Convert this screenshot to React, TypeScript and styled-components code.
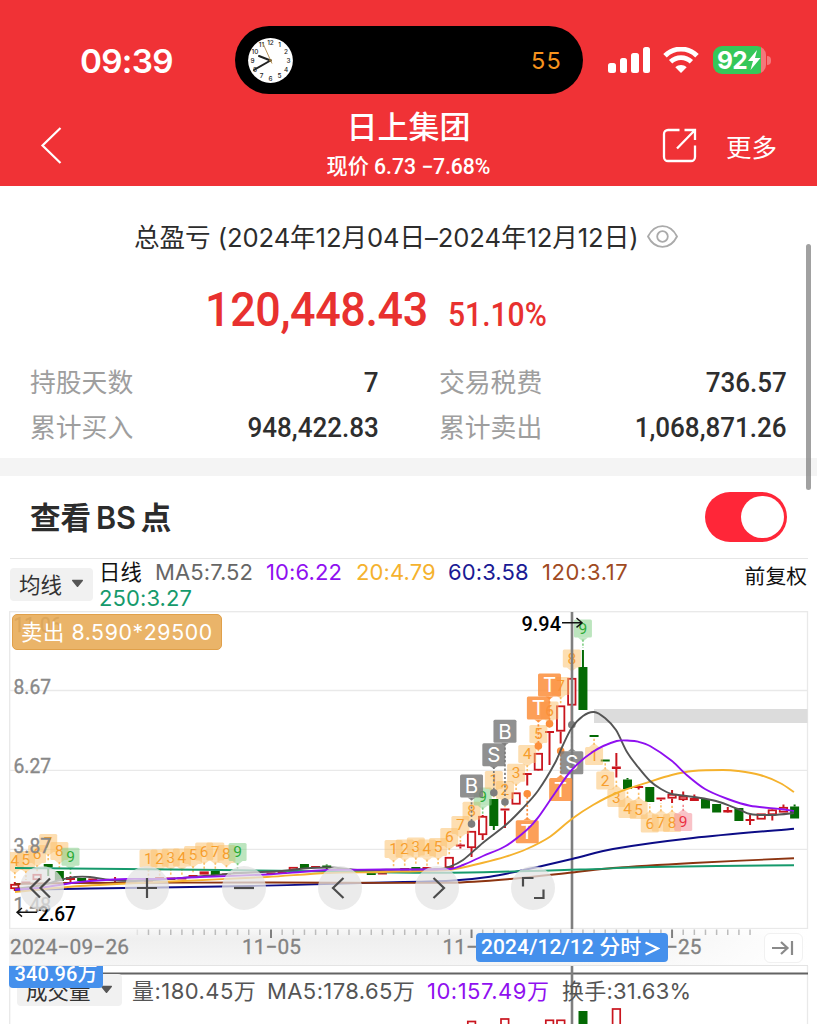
import React from "react";
import styled, { createGlobalStyle } from "styled-components";

const SANS = `Inter, "Noto Sans CJK SC", sans-serif`;
const DIN = `Roboto, "Noto Sans CJK SC", sans-serif`;

const Global = createGlobalStyle`
  * { box-sizing: border-box; }
  body { margin: 0; background: #fff; font-family: ${SANS}; color: #2c2c2c; overflow: hidden; }
  svg { display: block; }
`;

const Screen = styled.main`
  position: relative;
  width: 818px;
  height: 1024px;
  overflow: hidden;
  background: #fff;
  white-space: nowrap;
`;

/* ---------- header ---------- */

const Header = styled.header`
  width: 817px;
  height: 186px;
  background: #f03236;
  color: #fff;
`;

const StatusBar = styled.div`
  height: 102px;
  padding: 18px 46px 0 80px;
  display: flex;
  align-items: center;
`;

const Time = styled.span`
  width: 155px;
  padding-top: 1px;
  font-size: 33.3px;
  font-weight: 600;
  letter-spacing: -0.7px;
`;

const Island = styled.div`
  width: 348px;
  height: 68px;
  border-radius: 34px;
  background: #000;
  padding: 0 21px 0 13px;
  display: flex;
  align-items: center;
  justify-content: space-between;
`;

const Timer = styled.span`
  font-size: 23.5px;
  letter-spacing: 1.2px;
  color: #f7931d;
`;

const Indicators = styled.div`
  margin-left: 25px;
  display: flex;
  align-items: center;
`;

const Signal = styled.div`
  width: 42px;
  height: 26px;
  display: flex;
  align-items: flex-end;
  justify-content: space-between;
`;

const SignalBar = styled.i<{ $h: number }>`
  width: 7.5px;
  height: ${(p) => p.$h}px;
  border-radius: 2.5px;
  background: #fff;
`;

const WifiIcon = styled.svg`
  margin-left: 13px;
`;

const Battery = styled.div`
  margin-left: 14px;
  width: 53px;
  height: 28px;
  border-radius: 9px;
  padding-left: 4px;
  background: linear-gradient(90deg, #35c759 48px, #f4777a 48px);
  display: flex;
  align-items: center;
  font-size: 24.5px;
  font-weight: 700;
  letter-spacing: -0.7px;
`;

const BatteryNub = styled.i`
  margin-left: 1px;
  width: 4px;
  height: 9px;
  border-radius: 0 4px 4px 0;
  background: #f4777a;
`;

const NavBar = styled.div`
  height: 84px;
  display: grid;
  grid-template-columns: 240px 337px 240px;
`;

const NavLeft = styled.div`
  padding: 25px 0 0 40px;
`;

const NavTitle = styled.div`
  display: flex;
  flex-direction: column;
  align-items: center;
`;

const StockName = styled.h1`
  margin: 8px 0 0;
  height: 35px;
  line-height: 34px;
  font-size: 31px;
  font-weight: 500;
`;

const StockQuote = styled.div`
  height: 40px;
  line-height: 43px;
  font-family: ${DIN};
  font-size: 21.2px;
  font-weight: 500;
  letter-spacing: -0.05px;
`;

const NavRight = styled.div`
  padding: 3px 40px 0 0;
  display: flex;
  align-items: center;
  justify-content: flex-end;
  gap: 29px;
  font-size: 25.5px;
`;

/* ---------- summary ---------- */

const Summary = styled.section`
  height: 272px;
`;

const PeriodRow = styled.div`
  height: 98px;
  padding-left: 134px;
  display: flex;
  align-items: center;
`;

const Period = styled.span`
  font-size: 25.6px;
  letter-spacing: -0.08px;
  margin-right: 9px;
`;

const EyeIcon = styled.svg`
  margin-top: 3px;
`;

const ProfitRow = styled.div`
  height: 60px;
  padding: 4px 0 0 205px;
  display: flex;
  align-items: baseline;
  font-family: ${DIN};
  font-weight: 500;
  color: #e8312f;
  line-height: 44px;
`;

const Profit = styled.span`
  font-size: 48px;
  width: 243px;
  letter-spacing: -0.4px;
  transform: scaleX(0.935);
  transform-origin: 0 50%;
`;

const ProfitRate = styled.span`
  font-size: 32.5px;
  transform: scaleX(0.925);
  transform-origin: 0 50%;
`;

const Stats = styled.dl`
  margin: 15px 0 0;
  padding: 0 30px;
  display: grid;
  grid-template-columns: 349px 348px;
  column-gap: 60px;
  grid-auto-rows: 45px;
`;

const Stat = styled.div`
  display: flex;
  align-items: center;
  justify-content: space-between;
`;

const StatName = styled.dt`
  margin-top: -3px;
  font-size: 25.8px;
  font-weight: 400;
  color: #9e9e9e;
`;

const StatValue = styled.dd`
  margin: 2px 0 0;
  font-family: ${DIN};
  font-size: 27.5px;
  font-weight: 500;
  color: #2e2e2e;
  transform: scaleX(0.946);
  transform-origin: 100% 50%;
`;

const Band = styled.div`
  width: 817px;
  height: 18px;
  background: #f4f4f4;
`;

const ToggleRow = styled.section`
  height: 82px;
  padding: 0 31px 0 30px;
  display: flex;
  align-items: center;
  justify-content: space-between;
`;

const ToggleLabel = styled.h2`
  margin: -3px 0 0;
  font-size: 30.6px;
  font-weight: 600;
  word-spacing: -3px;
`;

const Toggle = styled.button`
  width: 82px;
  height: 50px;
  padding: 4px 4px 4px 36px;
  border: 0;
  border-radius: 25px;
  background: #ff2638;
`;

const Knob = styled.i`
  display: block;
  width: 43px;
  height: 42px;
  border-radius: 21px;
  background: #fff;
`;

const ScrollThumb = styled.i`
  position: absolute;
  left: 806px;
  top: 244px;
  width: 5px;
  height: 246px;
  border-radius: 3px;
  background: rgba(130, 130, 130, 0.75);
`;

/* ---------- indicator legend ---------- */

const Legend = styled.div`
  margin: 0 10px 0 10px;
  width: 798px;
  height: 53px;
  border-top: 1px solid #e6e6e6;
  display: flex;
`;

const Picker = styled.button<{ $w: number; $h: number }>`
  width: ${(p) => p.$w}px;
  height: ${(p) => p.$h}px;
  padding: 0 0 2px 9px;
  border: 0;
  border-radius: 4px;
  background: #f1f1f1;
  font: 400 21.5px ${SANS};
  color: #333;
  display: flex;
  align-items: center;
  gap: 9px;
`;

const LegendPicker = styled(Picker)`
  margin-top: 9px;
`;

const Values = styled.div`
  width: 560px;
  margin-left: 6px;
  display: flex;
  flex-wrap: wrap;
  font-size: 22px;
  line-height: 26px;
`;

const Value = styled.span<{ $c: string; $w: number; $ls?: number }>`
  width: ${(p) => p.$w}px;
  height: 26px;
  color: ${(p) => p.$c};
  letter-spacing: ${(p) => p.$ls ?? 0.1}px;
`;

const ChartPeriod = styled(Value)`
  font-size: 21.3px;
`;

const Adjust = styled.span`
  margin: 4px 1px 0 auto;
  line-height: 28px;
  font-size: 20.8px;
  color: #111;
`;

/* ---------- charts ---------- */

const ChartPanel = styled.section`
  position: relative;
  height: 318px;
`;

const TradeTip = styled.div`
  position: absolute;
  left: 12px;
  top: 3px;
  width: 210px;
  height: 36px;
  padding-left: 8px;
  border: 1px solid #e0a04a;
  border-radius: 5px;
  background: rgba(231, 170, 84, 0.88);
  color: #fff;
  font-size: 21.3px;
  line-height: 35px;
  letter-spacing: 0.6px;
`;

const Controls = styled.div`
  position: absolute;
  left: 20px;
  top: 255px;
  display: flex;
  gap: 52.5px;
`;

const Control = styled.button<{ $gap?: number }>`
  width: 44px;
  height: 44px;
  margin-right: ${(p) => p.$gap ?? 0}px;
  padding: 0;
  border: 0;
  border-radius: 22px;
  background: rgba(228, 228, 228, 0.75);
`;

const Axis = styled.div`
  position: relative;
  height: 37px;
  margin: 0 10px 0 9px;
  background: linear-gradient(90deg, rgba(255,255,255,0) 70%, #fff 100%), linear-gradient(#f8f8f8, #efefef 25%, #f6f6f6);
`;

const DateTag = styled.div`
  position: absolute;
  left: 467px;
  top: 4px;
  width: 192px;
  height: 29px;
  padding-left: 5px;
  border-radius: 4px;
  background: #4590ec;
  color: #fff;
  font-family: ${DIN};
  font-size: 21px;
  font-weight: 500;
  line-height: 27px;
  letter-spacing: 0.1px;
  display: flex;
  align-items: center;
  gap: 4px;
`;

const DateArrow = styled.svg`
  margin-top: 1px;
`;

const ToLatest = styled.button`
  position: absolute;
  left: 755px;
  top: 4px;
  width: 39px;
  height: 30px;
  border: 1px solid #f1f1f1;
  border-radius: 6px;
  background: #fff;
  padding: 0 0 0 7px;
`;

const VolumePanel = styled.section`
  position: relative;
  height: 58px;
  display: grid;
  overflow: hidden;
`;

const VolumeArt = styled.svg`
  grid-area: 1 / 1;
`;

const VolumeHead = styled.div`
  grid-area: 1 / 1;
  position: relative;
  height: 44px;
  padding: 8px 0 0 17px;
  display: flex;
  font-size: 22px;
  line-height: 34px;
  color: #555;
`;

const VolumeValues = styled.div`
  margin-left: 10px;
  display: flex;
`;

const VolumeTag = styled.div`
  position: absolute;
  left: 9px;
  top: -6px;
  width: 94px;
  height: 28px;
  border-radius: 4px;
  background: #4590ec;
  color: #fff;
  font-family: ${DIN};
  font-size: 20px;
  font-weight: 500;
  line-height: 28px;
  letter-spacing: 0.1px;
  text-align: center;
`;

/* ---------- chart data ---------- */

const RED = "#c9151e";
const GREEN = "#046a04";
const STEP = 11.14;
const at = (i: number) => 571.8 + i * STEP;

type Kind = "up" | "down" | "flat" | "flatDown";
/* slot, kind, body top, body bottom, wick top, wick bottom */
const candles: [number, Kind, number, number, number?, number?][] = [
  [-50, "up", 884, 889, 882, 891], [-49, "flat", 881.5, 883.5], [-48, "up", 874, 880], [-47, "down", 864, 867.5, 864, 876],
  [-46, "down", 871, 881], [-45, "flat", 877, 880, 876, 882], [-44, "flatDown", 878, 881], [-43, "flat", 878.5, 880],
  [-41, "flat", 879, 881, 877, 882], [-38, "flat", 881, 882.5], [-37, "flat", 877, 879], [-36, "flat", 877.5, 880],
  [-35, "flat", 877.5, 879.5], [-34, "flat", 875, 878], [-33, "up", 871.5, 874.5], [-32, "down", 871, 875],
  [-31, "flat", 873.5, 875], [-30, "flat", 872, 873.5], [-27, "flat", 872.5, 874], [-26, "flat", 872, 873.5],
  [-25, "up", 867, 871], [-24, "down", 864, 868], [-23, "flat", 866, 868], [-22, "flatDown", 865.5, 868, 864.5, 869],
  [-18, "flatDown", 873, 875], [-17, "flat", 873, 874.5], [-15, "flat", 868, 870.5], [-14, "flatDown", 867, 870.5],
  [-13, "flat", 867, 869.5], [-12, "flat", 868, 869.5], [-11, "up", 857, 868], [-10, "flat", 844.5, 846.5, 843.5, 848.5],
  [-9, "up", 831, 848, 831, 857], [-8, "up", 816, 835, 815, 840], [-7, "down", 799, 826, 799, 830],
  [-6, "flat", 808.5, 810.5, 808.5, 828], [-5, "up", 792.5, 804.5], [-4, "flat", 773, 775, 773, 785.5], [-3, "up", 753, 770.5, 753, 771],
  [-2, "flat", 731, 733, 731, 765], [-1, "up", 705.5, 731.5, 705.5, 743.5], [0, "up", 678, 705.5, 678, 724], [1, "down", 667, 710, 650, 710],
  [2, "flatDown", 735, 737], [3, "flatDown", 759.5, 761.5], [4, "flat", 766.5, 769, 753, 777.5], [5, "down", 779.5, 789, 778, 789],
  [6, "flat", 786, 788, 786, 789.5], [7, "down", 787, 802], [8, "flat", 797.5, 799.5, 797.5, 801], [9, "up", 794, 798.5, 790, 803],
  [10, "up", 796, 800, 791.5, 801], [11, "flat", 798, 801, 794.5, 801], [12, "down", 799, 808.5], [13, "down", 804, 812.5],
  [14, "flat", 810, 812.5, 807, 813], [15, "down", 808, 821], [16, "flat", 819, 821, 815, 825], [17, "up", 813.5, 819.5],
  [18, "up", 809.5, 815, 809, 820.5], [19, "up", 807, 812.5, 804.5, 812.5], [20, "down", 806.5, 818.5, 804.5, 818.5],
];

const lines: { color: string; pts: [number, number][] }[] = [
  { color: "#0c0c86", pts: [[15, 890], [90, 888.5], [250, 886], [360, 883], [450, 880.7], [490, 876.7], [533, 868], [572, 859], [613, 849], [693, 838], [794, 828.7]] },
  { color: "#8c3410", pts: [[15, 884], [67, 883], [270, 882.5], [450, 882.7], [510, 879], [572, 872.5], [613, 868], [693, 863], [794, 858.2]] },
  { color: "#169a6c", pts: [[15, 868], [220, 870], [330, 871.5], [450, 872.7], [580, 869.5], [650, 867], [794, 865.2]] },
  { color: "#f5b22e", pts: [[15, 892], [80, 886], [183, 881], [267, 877], [327, 873], [383, 872], [450, 869.7], [483, 862.7], [505.7, 856.7], [526.7, 849], [550, 836.7], [571.7, 819], [593, 805], [616.7, 793], [650, 781.7], [671.7, 775], [693, 771], [723, 770], [738, 771], [760, 775], [780, 783], [794, 792]] },
  { color: "#545454", pts: [[15, 889], [43, 885], [60, 880], [75, 877], [90, 877], [110, 880], [135, 881], [170, 879], [204, 876], [240, 873], [282, 871], [304, 868.5], [330, 867.5], [360, 870], [400, 869.5], [440, 869], [450, 866.7], [463, 860], [483, 842.7], [505.7, 825], [522, 809], [538, 790.7], [555, 763], [563, 745], [571.7, 728], [583, 716], [594, 712], [605, 718], [616, 730], [627, 752], [638, 767], [650, 781], [661, 789], [672, 794], [694, 797], [716, 801], [738, 809], [750, 814], [772, 815], [794, 813]] },
  { color: "#8f10f0", pts: [[15, 889.5], [43, 887.5], [80, 882], [127, 879], [160, 879], [200, 877], [267, 874.5], [300, 872], [327, 870], [383, 869.5], [450, 869], [463, 865], [483, 856], [505.7, 846], [526.7, 830], [538, 817.7], [555, 793], [571.7, 770], [593, 751.7], [616.7, 741], [630, 740.7], [638, 741.7], [650, 746], [671.7, 760.7], [686.7, 775], [705, 789], [727.7, 799], [750, 805.7], [780, 809], [794, 811]] },
];

/* smooth curve through the points, Catmull-Rom converted to Bezier */
function curve(p: [number, number][]) {
  let d = `M${p[0][0]} ${p[0][1]}`;
  for (let i = 0; i < p.length - 1; i++) {
    const a = p[Math.max(0, i - 1)], b = p[i], c = p[i + 1], e = p[Math.min(p.length - 1, i + 2)];
    const k = Math.min(1, ((c[0] - b[0]) / Math.max(1, c[0] - a[0])) * 2) / 6;
    const m = Math.min(1, ((c[0] - b[0]) / Math.max(1, e[0] - b[0])) * 2) / 6;
    d += `C${b[0] + (c[0] - a[0]) * k} ${b[1] + (c[1] - a[1]) * k} ${c[0] - (e[0] - b[0]) * m} ${c[1] - (e[1] - b[1]) * m} ${c[0]} ${c[1]}`;
  }
  return d;
}

/* slot, count, badge centre, candle edge that the stem reaches */
const counts: [number, number, number, number][] = [
  [-50, 4, 861, 880], [-49, 5, 860, 880], [-48, 6, 854, 872], [-47, 7, 843, 862], [-46, 8, 851, 870], [-45, 9, 856.7, 875],
  [-38, 1, 858.5, 878], [-37, 2, 858.5, 876], [-36, 3, 857.5, 875], [-35, 4, 857.5, 875], [-34, 5, 855, 873], [-33, 6, 851.5, 869],
  [-32, 7, 851.5, 869], [-31, 8, 854, 871], [-30, 9, 852, 870], [-16, 1, 849, 867], [-15, 2, 848.5, 867], [-14, 3, 846.5, 865],
  [-13, 4, 848.5, 866], [-12, 5, 847, 866], [-11, 6, 837, 855], [-10, 7, 825, 843], [-9, 8, 810.7, 829], [-8, 9, 796.5, 815],
  [-7, 1, 780, 798], [-6, 2, 790, 808], [-5, 3, 772.7, 791], [-4, 4, 754, 772], [-3, 5, 734, 752], [-2, 6, 710.5, 729],
  [-1, 7, 686, 705], [0, 8, 658.5, 677], [1, 9, 628.5, 648],
  [2, 1, 756, 738], [3, 2, 780.5, 763], [4, 3, 798, 779], [5, 4, 809, 791], [6, 5, 810, 791], [7, 6, 823.5, 804], [8, 7, 822.5, 803],
  [9, 8, 823, 804], [10, 9, 822, 803],
];

/* slot, letter, tag centre, dot centre */
const trades: [number, string, number, number][] = [
  [-9, "B", 786, 824], [-7, "S", 754.7, 792.7], [-6, "B", 731.3, 802], [-3, "T", 708, 746], [-2, "T", 685, 723.7],
  [-4, "T", 831.7, 793.7], [-1, "T", 789.5, 751], [0, "S", 762.7, 724.7],
];

function Candle({ c }: { c: (typeof candles)[number] }) {
  const [i, kind, top, bottom, wt, wb] = c;
  const x = at(i);
  const color = kind === "up" || kind === "flat" ? RED : GREEN;
  const wick = (a: number, b: number) => <line x1={x} x2={x} y1={a} y2={b} stroke={color} strokeWidth={2} />;
  return (
    <g>
      {wt !== undefined && wt < top && wick(wt, top)}
      {wb !== undefined && wb > bottom && wick(bottom, wb)}
      {kind === "up" ? (
        <rect x={x - 3.7} y={top + 0.8} width={7.4} height={bottom - top - 1.6} fill="#fff" stroke={color} strokeWidth={1.8} />
      ) : (
        <rect x={x - 4.5} y={top} width={9} height={bottom - top} fill={color} />
      )}
    </g>
  );
}

function CountBadge({ c }: { c: (typeof counts)[number] }) {
  const [i, n, y, edge] = c;
  const x = at(i);
  const above = edge > y;
  const nine = n === 9;
  const tone = nine ? (above ? "#1ca52a" : "#ea1f36") : "#f7981d";
  const fill = nine ? (above ? "#7fce83" : "#f38b93") : "#fbc06a";
  const s = above ? 1 : -1;
  return (
    <g>
      <line x1={x} x2={x} y1={y + s * 11} y2={edge} stroke={fill} strokeWidth={1.6} strokeDasharray="2.2 1.8" />
      <path d={`M${x - 5} ${y + s * 9}h10l-5 ${s * 4}z`} fill={fill} opacity={0.5} />
      <rect x={x - 9} y={y - 9} width={18} height={18} rx={1.5} fill={fill} opacity={0.52} />
      <text x={x} y={y + 5.3} textAnchor="middle" fontFamily="Roboto, sans-serif" fontSize={15.5} fill={tone} opacity={0.9}>{n}</text>
    </g>
  );
}

function TradeTag({ t }: { t: (typeof trades)[number] }) {
  const [i, letter, y, dot] = t;
  const x = at(i);
  const color = letter === "T" ? "#fc8f3c" : "#7d7d7d";
  const s = dot > y ? 1 : -1;
  return (
    <g>
      <line x1={x} x2={x} y1={y + s * 12} y2={dot} stroke={color} strokeWidth={1.7} strokeDasharray="2.2 2" />
      <circle cx={x} cy={dot} r={3.8} fill={color} />
      <g opacity={0.85}>
        <rect x={x - 11.5} y={y - 11.5} width={23} height={23} rx={1.5} fill={color} />
        <path d={`M${x - 4} ${y + s * 11.4}h8l-4 ${s * 3}z`} fill={color} />
      </g>
      <text x={x} y={y + 7.4} textAnchor="middle" fontFamily="Inter, sans-serif" fontSize={20.5} fill="#fff">{letter}</text>
    </g>
  );
}

const priceLabels: [string, number][] = [["11.06", 625], ["8.67", 686.5], ["6.27", 766], ["3.87", 845.3], ["1.48", 905]];

function PriceChart() {
  return (
    <svg width={818} height={318} viewBox="0 611 818 318">
      <g stroke="#e9e9e9" strokeWidth={1.3} fill="none">
        <rect x={9.7} y={611.7} width={797.8} height={316.8} />
        <path d="M10 690.5H807M10 770.4H807M10 849.4H807" />
      </g>
      <rect x={594} y={709} width={213.5} height={14} fill="#dcdcdc" />
      <clipPath id="plot"><rect x={10} y={611} width={798} height={318} /></clipPath>
      <g clipPath="url(#plot)">
        {candles.map((c) => <Candle key={c[0]} c={c} />)}
        {counts.map((c) => <CountBadge key={c[0]} c={c} />)}
        <line x1={572} x2={572} y1={612} y2={929} stroke="#7f7f7f" strokeWidth={2.6} />
        {trades.map((t) => <TradeTag key={t[0]} t={t} />)}
        {lines.map((l) => <path key={l.color} d={curve(l.pts)} fill="none" stroke={l.color} strokeWidth={1.9} />)}
      </g>
      <g fontFamily="Roboto, sans-serif" fontSize={19.8} fontWeight={400} fill="#888" stroke="#888" strokeWidth={0.35}>
        {priceLabels.map(([t, y]) => (
          <text key={t} x={13.5} y={y + 7.2} textLength={t.length > 4 ? 48 : 37.5} lengthAdjust="spacingAndGlyphs">{t}</text>
        ))}
      </g>
      <g fontFamily="Roboto, sans-serif" fontSize={20.8} fontWeight={500} fill="#000">
        <text x={521.5} y={631.3} textLength={39.5} lengthAdjust="spacingAndGlyphs">9.94</text>
        <text x={38} y={920.5} textLength={38} lengthAdjust="spacingAndGlyphs">2.67</text>
      </g>
      <path d="M562 622.7H582M576.5 618l5.5 4.7-5.5 4.7M37 912.3H17M22 908l-5 4.3 5 4.3" stroke="#111" strokeWidth={1.4} fill="none" />
    </svg>
  );
}

const ticks = Array.from({ length: 56 }, (_, k) => k - 39);
const months = [-27, -9, 9];

function AxisArt() {
  return (
    <svg width={799} height={37} viewBox="9 929 799 37">
      {ticks.map((i) => {
        const major = months.includes(i);
        return <line key={i} x1={at(i)} x2={at(i)} y1={929.5} y2={major ? 938 : 935} stroke={major ? "#808080" : i === -39 ? "#e2e2e2" : "#bcbcbc"} strokeWidth={major ? 2 : 1.5} />;
      })}
      <line x1={9} x2={808} y1={965.5} y2={965.5} stroke="#e4e4e4" />
      <g fontFamily="Roboto, sans-serif" fontSize={20.8} fontWeight={400} fill="#828282" stroke="#828282" strokeWidth={0.3}>
        <text x={10} y={953.8} textLength={119}>2024−09−26</text>
        <text x={242} y={953.8} textLength={59}>11−05</text>
        <text x={442.5} y={953.8} textLength={59}>11−21</text>
        <text x={642.5} y={953.8} textLength={59}>11−25</text>
      </g>
    </svg>
  );
}

const marks = Array.from({ length: 12 }, (_, k) => k + 1);

function Clock() {
  return (
    <svg width={45} height={45} viewBox="-22.5 -22.5 45 45">
      <circle r={22.4} fill="#fff" />
      {marks.map((h) => {
        const a = (h * Math.PI) / 6;
        return <text key={h} x={Math.sin(a) * 18} y={-Math.cos(a) * 18 + 2.3} fontFamily="Inter, sans-serif" fontSize={6.4} fontWeight={500} fill="#222" textAnchor="middle">{h}</text>;
      })}
      <path d="M0 0L-11.5-4.5" stroke="#222" strokeWidth={2} strokeLinecap="round" />
      <path d="M0 0L-16.5 9.5" stroke="#222" strokeWidth={2} strokeLinecap="round" />
      <path d="M1.5 3L-8-18" stroke="#b9955a" strokeWidth={1} />
      <circle r={1.4} fill="#8a6d3b" />
    </svg>
  );
}

const Caret = () => <svg width={13} height={9} viewBox="0 0 12 9"><path d="M1.2 0.8h9.6a.7.7 0 0 1 .5 1.1L6.6 7.7a.8.8 0 0 1-1.2 0L.7 1.9a.7.7 0 0 1 .5-1.1z" fill="#555" /></svg>;

const glyphs = [
  "M20 12.5L10.5 22L20 31.5M30 12.5L20.5 22L30 31.5",
  "M12 22H32M22 12V32",
  "M12 22H32",
  "M25.5 12L15 22L25.5 32",
  "M18.5 12L29 22L18.5 32",
  "M12 20.5V12H22.5M32.500 23.5V32H23",
];

export default function App() {
  return (
    <Screen>
      <Global />
      <Header>
        <StatusBar>
          <Time>09:39</Time>
          <Island>
            <Clock />
            <Timer>55</Timer>
          </Island>
          <Indicators>
            <Signal>
              {[10, 15, 20.5, 26].map((h) => <SignalBar key={h} $h={h} />)}
            </Signal>
            <WifiIcon width={36} height={26} viewBox="0 0 36 26">
              <path d="M2 8.7C11-.1 25-.1 34 8.7" stroke="#fff" strokeWidth={5} fill="none" />
              <path d="M7.6 14.8C13.5 9.2 22.5 9.2 28.4 14.8" stroke="#fff" strokeWidth={4.8} fill="none" />
              <path d="M12.3 20.2C15.6 17.2 20.4 17.2 23.7 20.2L18 25.9z" fill="#fff" />
            </WifiIcon>
            <Battery>
              92
              <svg width={14} height={20} viewBox="0 0 14 20"><path d="M10 0L1 11h5L3.5 20L13.5 8H8z" fill="#fff" /></svg>
            </Battery>
            <BatteryNub />
          </Indicators>
        </StatusBar>
        <NavBar>
          <NavLeft>
            <svg width={22} height={37} viewBox="0 0 22 37"><path d="M20.5 1L2.5 18.5L20.5 36" stroke="#fff" strokeWidth={2.2} fill="none" /></svg>
          </NavLeft>
          <NavTitle>
            <StockName>日上集团</StockName>
            <StockQuote>现价 6.73 −7.68%</StockQuote>
          </NavTitle>
          <NavRight>
            <svg width={35} height={35} viewBox="0 0 35 35" fill="none" stroke="#fff" strokeWidth={2.3}>
              <path d="M17.5 2H6A4 4 0 0 0 2 6V29A4 4 0 0 0 6 33H29A4 4 0 0 0 33 29V17.5" />
              <path d="M22.5 2H33V12M33 2L15 20.5" />
            </svg>
            <span>更多</span>
          </NavRight>
        </NavBar>
      </Header>

      <Summary>
        <PeriodRow>
          <Period>总盈亏 (2024年12月04日–2024年12月12日)</Period>
          <EyeIcon width={31} height={23} viewBox="0 0 31 23" fill="none" stroke="#aaa" strokeWidth={1.8}>
            <path d="M1 11.5C8-2.3 23-2.3 30 11.5C23 25.3 8 25.3 1 11.5z" />
            <circle cx={15.5} cy={11.5} r={5.3} />
          </EyeIcon>
        </PeriodRow>
        <ProfitRow>
          <Profit>120,448.43</Profit>
          <ProfitRate>51.10%</ProfitRate>
        </ProfitRow>
        <Stats>
          <Stat><StatName>持股天数</StatName><StatValue>7</StatValue></Stat>
          <Stat><StatName>交易税费</StatName><StatValue>736.57</StatValue></Stat>
          <Stat><StatName>累计买入</StatName><StatValue>948,422.83</StatValue></Stat>
          <Stat><StatName>累计卖出</StatName><StatValue>1,068,871.26</StatValue></Stat>
        </Stats>
      </Summary>
      <Band />
      <ToggleRow>
        <ToggleLabel>查看 BS 点</ToggleLabel>
        <Toggle><Knob /></Toggle>
      </ToggleRow>

      <Legend>
        <LegendPicker $w={83} $h={33}>均线<Caret /></LegendPicker>
        <Values>
          <ChartPeriod $c="#111" $w={56}>日线</ChartPeriod>
          <Value $c="#666" $w={111}>MA5:7.52</Value>
          <Value $c="#8f10f0" $w={90}>10:6.22</Value>
          <Value $c="#f5b22e" $w={92}>20:4.79</Value>
          <Value $c="#1a1a94" $w={94}>60:3.58</Value>
          <Value $c="#a04a22" $w={100} $ls={0.6}>120:3.17</Value>
          <Value $c="#169a6c" $w={96}>250:3.27</Value>
        </Values>
        <Adjust>前复权</Adjust>
      </Legend>

      <ChartPanel>
        <PriceChart />
        <TradeTip>卖出 8.590*29500</TradeTip>
        <Controls>
          {glyphs.map((d, i) => (
            <Control key={d} $gap={i === 0 ? 8.5 : 0}>
              <svg width={44} height={44} viewBox="0 0 44 44"><path d={d} fill="none" stroke="#4c4c4c" strokeWidth={2.2} /></svg>
            </Control>
          ))}
        </Controls>
      </ChartPanel>

      <Axis>
        <AxisArt />
        <DateTag>
          <span>2024/12/12 分时</span>
          <DateArrow width={15} height={15} viewBox="0 0 15 15"><path d="M0.5 1.5L13 7.5L0.5 13.5" fill="none" stroke="#fff" strokeWidth={2.1} /></DateArrow>
        </DateTag>
        <ToLatest>
          <svg width={22} height={16} viewBox="0 0 22 16" fill="none" stroke="#8a8a8a" strokeWidth={2.2}><path d="M0 8H15.5M9 2L15.5 8L9 14M20 1V15" /></svg>
        </ToLatest>
      </Axis>

      <VolumePanel>
        <VolumeArt width={818} height={58} viewBox="0 966 818 58">
          <path d="M9.7 966V1024M807.5 966V1024" stroke="#e9e9e9" strokeWidth={1.3} />
          <path d="M10 973.5H808" stroke="#636363" strokeWidth={1.8} />
          <rect x={467.8} y={1021.5} width={7.6} height={8} fill="none" stroke={RED} strokeWidth={1.7} />
          <rect x={501} y={1019} width={7.6} height={8} fill="none" stroke={RED} strokeWidth={1.7} />
          <rect x={545.8} y={1020.3} width={7.6} height={8} fill="none" stroke={RED} strokeWidth={1.7} />
          <rect x={557} y={1020.3} width={7.6} height={8} fill="none" stroke={RED} strokeWidth={1.7} />
          <rect x={578.5} y={1011} width={9} height={13} fill={GREEN} />
          <rect x={612.6} y={1009} width={7.6} height={18} fill="none" stroke={RED} strokeWidth={1.7} />
          <line x1={572} x2={572} y1={966} y2={1024} stroke="#7f7f7f" strokeWidth={2.6} />
        </VolumeArt>
        <VolumeHead>
          <Picker $w={105} $h={32}>成交量<Caret /></Picker>
          <VolumeValues>
            <Value $c="#555" $w={135} $ls={0.45}>量:180.45万</Value>
            <Value $c="#555" $w={160} $ls={0.4}>MA5:178.65万</Value>
            <Value $c="#8f10f0" $w={135} $ls={0.5}>10:157.49万</Value>
            <Value $c="#555" $w={130} $ls={0.2}>换手:31.63%</Value>
          </VolumeValues>
        </VolumeHead>
        <VolumeTag>340.96万</VolumeTag>
      </VolumePanel>
      <ScrollThumb />
    </Screen>
  );
}
